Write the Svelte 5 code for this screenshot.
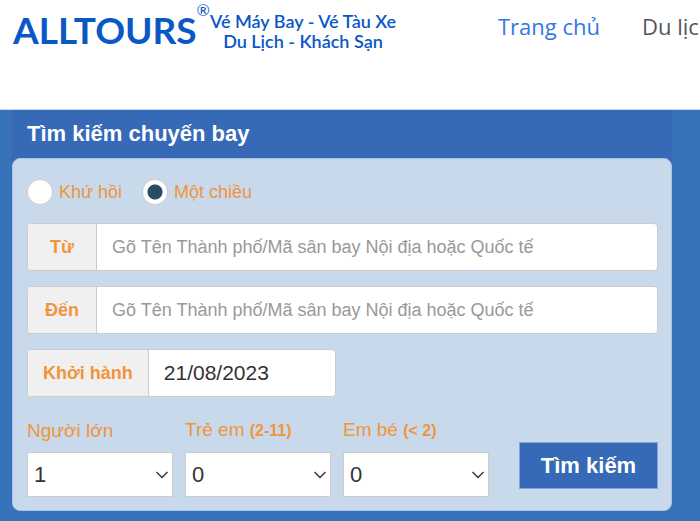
<script lang="ts">
  const places = [
    { id: 'from', label: 'Từ' },
    { id: 'to', label: 'Đến' },
  ];
  const passengers = [
    { id: 'adults', label: 'Người lớn', note: '', count: 1 },
    { id: 'children', label: 'Trẻ em', note: '(2-11)', count: 0 },
    { id: 'infants', label: 'Em bé', note: '(< 2)', count: 0 },
  ];
  const options = [0, 1, 2, 3, 4, 5, 6, 7, 8, 9];

  let trip = $state('oneway');
  let date = $state('21/08/2023');
</script>

<header class="site-header">
  <a class="logo" href="/">
    <span class="brand">ALLTOURS</span>
    <span class="mark">®</span>
    <span class="tagline">Vé Máy Bay - Vé Tàu Xe<br />Du Lịch - Khách Sạn</span>
  </a>
  <nav class="menu">
    <a class="active" href="/">Trang chủ</a>
    <a href="/du-lich">Du lịch</a>
  </nav>
</header>

<main class="search">
  <div class="search-box">
    <h1>Tìm kiếm chuyến bay</h1>
    <form class="panel" onsubmit={(e) => e.preventDefault()}>
      <div class="trip">
        <label><input type="radio" name="trip" value="return" bind:group={trip} />Khứ hồi</label>
        <label><input type="radio" name="trip" value="oneway" bind:group={trip} />Một chiều</label>
      </div>

      {#each places as place (place.id)}
        <div class="field">
          <label for={place.id}>{place.label}</label>
          <input id={place.id} type="text" placeholder="Gõ Tên Thành phố/Mã sân bay Nội địa hoặc Quốc tế" />
        </div>
      {/each}

      <div class="field date">
        <label for="depart">Khởi hành</label>
        <input id="depart" type="text" bind:value={date} />
      </div>

      <div class="bottom">
        {#each passengers as p (p.id)}
          <div class="count">
            <label for={p.id}>{p.label} {#if p.note}<b>{p.note}</b>{/if}</label>
            <div class="select">
              <select id={p.id} bind:value={p.count}>
                {#each options as n}
                  <option value={n}>{n}</option>
                {/each}
              </select>
              <svg viewBox="0 0 12 8" aria-hidden="true"><path d="M.5 1 6 6.5 11.5 1" /></svg>
            </div>
          </div>
        {/each}
        <button type="submit">Tìm kiếm</button>
      </div>
    </form>
  </div>
</main>

<style>
  :global(body) {
    margin: 0;
    background: #3673b9;
    font-family: 'Liberation Sans', Arial, sans-serif;
    overflow-x: hidden;
  }
  .site-header {
    display: flex;
    box-sizing: border-box;
    height: 110px;
    padding-left: 13px;
    background: #fff;
    border-bottom: 1px solid #c9d8ea;
    overflow: hidden;
    white-space: nowrap;
  }
  .logo {
    display: flex;
    flex: none;
    align-items: flex-start;
    width: 485px;
    color: #0a57c6;
    font-family: Lato, sans-serif;
    text-decoration: none;
  }
  .brand {
    margin-top: 6px;
    font-size: 37px;
    font-weight: 700;
    line-height: 48px;
  }
  .mark {
    font-size: 16px;
    line-height: 20px;
  }
  .tagline {
    margin-top: 11px;
    font-size: 18px;
    font-weight: 600;
    line-height: 20px;
    text-align: center;
  }
  .menu {
    display: flex;
    flex: none;
    gap: 42px;
    padding-top: 10px;
    font-family: 'Open Sans', sans-serif;
    font-size: 22px;
    line-height: 32px;
  }
  .menu a {
    color: #555;
    text-decoration: none;
  }
  .menu .active {
    color: #3178e6;
  }

  .search {
    padding: 0 28px 10px 12px;
  }
  .search-box {
    background: #366ab6;
    border-radius: 0 0 8px 8px;
  }
  h1 {
    margin: 0;
    padding: 0 15px;
    color: #fff;
    font-size: 22px;
    font-weight: 700;
    line-height: 48px;
  }
  .panel {
    padding: 20px 13px 13px 14px;
    background: #c8d9eb;
    border: 1px solid #aac4e4;
    border-radius: 8px;
  }
  .trip {
    display: flex;
    gap: 20px;
    margin-bottom: 18px;
    color: #f0953a;
    font-size: 18px;
    line-height: 26px;
  }
  .trip label {
    display: flex;
    align-items: center;
    gap: 6px;
  }
  .trip input {
    appearance: none;
    box-sizing: border-box;
    width: 26px;
    height: 26px;
    margin: 0;
    background: #fff;
    border: 1px solid #d3cfcd;
    border-radius: 50%;
  }
  .trip input:checked {
    background: radial-gradient(circle, #264d62 7px, #fff 8px);
  }

  .field {
    display: flex;
    box-sizing: border-box;
    height: 48px;
    margin-bottom: 15px;
    background: #fff;
    border: 1px solid #ccc;
    border-radius: 4px;
    overflow: hidden;
  }
  .field label {
    box-sizing: border-box;
    min-width: 69px;
    padding: 0 15px;
    background: #f0f0f0;
    border-right: 1px solid #ccc;
    color: #f0953a;
    font-size: 18px;
    font-weight: 700;
    line-height: 46px;
    text-align: center;
  }
  .field input {
    flex: 1;
    min-width: 0;
    padding: 1px 15px;
    background: none;
    border: 0;
    color: #333;
    font: 18px 'Liberation Sans', Arial, sans-serif;
  }
  .field input::placeholder {
    color: #999;
    opacity: 1;
  }
  .date {
    width: 49%;
  }
  .date input {
    font-size: 21px;
  }

  .bottom {
    display: flex;
    align-items: flex-end;
    gap: 12px;
    margin-top: 22px;
  }
  .count {
    flex: 0 1 146px;
    min-width: 0;
  }
  .count label {
    display: block;
    margin-bottom: 10px;
    color: #f0953a;
    font-size: 19px;
    line-height: 22px;
    white-space: nowrap;
  }
  .count b {
    font-size: 16px;
  }
  .select {
    display: grid;
    align-items: center;
  }
  .select > * {
    grid-area: 1 / 1;
  }
  select {
    appearance: none;
    box-sizing: border-box;
    width: 100%;
    height: 45px;
    padding: 0 6px;
    background: #fff;
    border: 1px solid #ccc;
    border-radius: 0;
    color: #333;
    font: 22px 'Liberation Sans', Arial, sans-serif;
  }
  .select svg {
    justify-self: end;
    width: 12px;
    height: 8px;
    margin-right: 5px;
    fill: none;
    stroke: #333;
    stroke-width: 1.4;
    pointer-events: none;
  }
  button {
    width: 139px;
    height: 47px;
    margin: 0 0 8px auto;
    padding: 0;
    background: #366ab6;
    border: 1px solid #7ea6dc;
    color: #fff;
    font: 700 22px 'Liberation Sans', Arial, sans-serif;
  }
</style>
